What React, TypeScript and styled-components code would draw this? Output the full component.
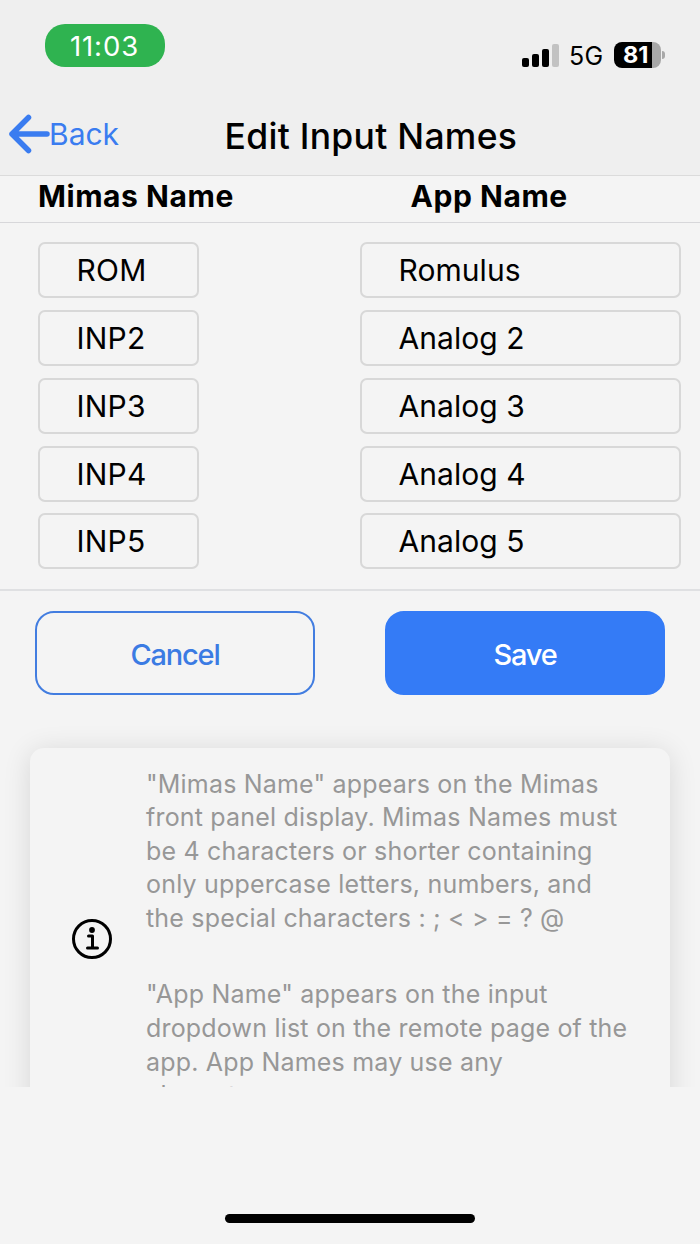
import React from "react";
import styled, { createGlobalStyle } from "styled-components";

const GlobalStyle = createGlobalStyle`
  * { box-sizing: border-box; }
  body { margin: 0; background: #f4f4f4; }
`;

const Screen = styled.div`
  width: 700px;
  height: 1244px;
  display: flex;
  flex-direction: column;
  overflow: hidden;
  background: #f4f4f4;
  color: #000;
  font-family: Inter, "Liberation Sans", sans-serif;
  font-size: 30px;
`;

const TopArea = styled.header`
  height: 176px;
  flex: none;
  background: #efefef;
  border-bottom: 1.5px solid #dbdbdb;
`;

const StatusBar = styled.div`
  height: 95px;
  display: flex;
  justify-content: space-between;
  padding: 24px 35px 0 44.5px;
`;

const TimePill = styled.div`
  width: 120px;
  height: 43px;
  border-radius: 20px;
  background: #2fb350;
  color: #fff;
  font-size: 27.5px;
  line-height: 44px;
  letter-spacing: 0.9px;
  text-align: center;
`;

const Indicators = styled.div`
  display: flex;
  height: 26px;
  margin-top: 18px;
`;

const SignalIcon = styled.svg`
  width: 37px;
  height: 26px;
  flex: none;
`;

const Network = styled.span`
  width: 34px;
  margin: 0 11px 0 10px;
  font-size: 25px;
  line-height: 28px;
  letter-spacing: 0.3px;
  white-space: nowrap;
`;

const Battery = styled.div`
  width: 47px;
  height: 26px;
  border-radius: 8px;
  background: linear-gradient(90deg, #000 38px, #a8a8a8 38px);
  color: #fff;
  font-size: 23.5px;
  font-weight: 700;
  line-height: 26px;
  padding-left: 9px;
  letter-spacing: 0;
`;

const BatteryTip = styled.div`
  width: 3px;
  height: 8px;
  margin: 9px 0 0 1px;
  border-radius: 0 3px 3px 0;
  background: #a8a8a8;
`;

const NavBar = styled.nav`
  display: grid;
  grid-template-columns: 224.5px 1fr;
  align-items: center;
  height: 78px;
`;

const BackLink = styled.a`
  display: flex;
  align-items: center;
  padding-left: 8px;
  color: #3a7cf0;
  font-weight: 400;
  letter-spacing: 0;
`;

const BackArrow = styled.svg`
  width: 42px;
  height: 40px;
  flex: none;
  margin-right: -1px;
`;

const Title = styled.h1`
  margin: 4px 0 0;
  font-size: 35.5px;
  font-weight: 500;
  letter-spacing: 0.28px;
  white-space: nowrap;
`;

const ColumnHeads = styled.div`
  display: grid;
  grid-template-columns: 372.5px 1fr;
  height: 47px;
  flex: none;
  padding-left: 38px;
  border-bottom: 1px solid #d7d7da;
  font-weight: 650;
  letter-spacing: 0.55px;
  line-height: 40px;
`;

const FieldList = styled.div`
  display: flex;
  flex-direction: column;
  gap: 11.8px;
  padding: 19.2px 19px 18px 37.5px;
  height: 368px;
  flex: none;
  border-bottom: 2px solid #dfe0e2;
`;

const FieldRow = styled.div`
  display: flex;
  justify-content: space-between;
`;

const Field = styled.div<{ $width: number; $spacing: number }>`
  width: ${(p) => p.$width}px;
  height: 56px;
  border: 2px solid #d8d8d8;
  border-radius: 7px;
  padding-left: 37px;
  line-height: 53px;
  letter-spacing: ${(p) => p.$spacing}px;
`;

const Actions = styled.div`
  display: flex;
  justify-content: space-between;
  flex: none;
  padding: 20px 35px 0;
  height: 105.5px;
`;

const Button = styled.button<{ $primary?: boolean }>`
  width: 280px;
  height: 84px;
  padding: 3px 0 0;
  border: 2px solid ${(p) => (p.$primary ? "#347bf6" : "#427de0")};
  border-radius: 19px;
  background: ${(p) => (p.$primary ? "#347bf6" : "transparent")};
  color: ${(p) => (p.$primary ? "#fff" : "#3b7be3")};
  font: 450 29px Inter, "Liberation Sans", sans-serif;
  letter-spacing: -1.2px;
`;

const ScrollArea = styled.div`
  height: 390.5px;
  flex: none;
  overflow: hidden;
  padding: 51px 30px 0;
`;

const InfoCard = styled.section`
  display: grid;
  grid-template-columns: 116px 1fr;
  height: 383px;
  border-radius: 14px;
  background: #f4f4f4;
  box-shadow: 0 3px 28px rgba(0, 0, 0, 0.12);
`;

const InfoIcon = styled.svg`
  width: 42px;
  height: 42px;
  align-self: center;
  margin-left: 41px;
`;

const InfoText = styled.div`
  padding-top: 20px;
  color: #979797;
  font-size: 25px;
  line-height: 33.6px;
  letter-spacing: 0.19px;
  white-space: nowrap;
`;

const Paragraph = styled.p`
  margin: 0;
  & + & { margin-top: 43px; }
`;

const HomeIndicator = styled.div`
  width: 250px;
  height: 9px;
  margin: 127px auto 0;
  border-radius: 5px;
  background: #000;
`;

const inputs = [
  ["ROM", "Romulus"],
  ["INP2", "Analog 2"],
  ["INP3", "Analog 3"],
  ["INP4", "Analog 4"],
  ["INP5", "Analog 5"],
];

export default function App() {
  return (
    <Screen>
      <GlobalStyle />
      <TopArea>
        <StatusBar>
          <TimePill>11:03</TimePill>
          <Indicators>
            <SignalIcon viewBox="0 0 37 26">
              <rect x="0" y="16" width="7" height="9" rx="2" />
              <rect x="10" y="12" width="7" height="13" rx="2" />
              <rect x="20" y="7" width="7" height="18" rx="2" />
              <rect x="30" y="2" width="7" height="23" rx="2" fill="#c2c2c2" />
            </SignalIcon>
            <Network>5G</Network>
            <Battery>81</Battery>
            <BatteryTip />
          </Indicators>
        </StatusBar>
        <NavBar>
          <BackLink>
            <BackArrow viewBox="0 0 42 40" fill="none" stroke="#3a7cf0" strokeWidth="5.5" strokeLinecap="round" strokeLinejoin="round">
              <path d="M39 20H4M20.5 3.5L4 20l16.500 16.500" />
            </BackArrow>
            Back
          </BackLink>
          <Title>Edit Input Names</Title>
        </NavBar>
      </TopArea>
      <ColumnHeads>
        <span>Mimas Name</span>
        <span>App Name</span>
      </ColumnHeads>
      <FieldList>
        {inputs.map(([mimas, app]) => (
          <FieldRow key={mimas}>
            <Field $width={161} $spacing={0.2}>{mimas}</Field>
            <Field $width={321.5} $spacing={0.05}>{app}</Field>
          </FieldRow>
        ))}
      </FieldList>
      <Actions>
        <Button>Cancel</Button>
        <Button $primary>Save</Button>
      </Actions>
      <ScrollArea>
        <InfoCard>
          <InfoIcon viewBox="0 0 42 42" fill="none" stroke="#000" strokeWidth="3" strokeLinecap="round" strokeLinejoin="round">
            <circle cx="21" cy="21" r="18.500" />
            <path d="M17.500 18H21.500V30M16.500 30H26.500" />
            <circle cx="21" cy="12" r="2.900" fill="#000" stroke="none" />
          </InfoIcon>
          <InfoText>
            <Paragraph>
              "Mimas Name" appears on the Mimas<br />
              front panel display. Mimas Names must<br />
              be 4 characters or shorter containing<br />
              only uppercase letters, numbers, and<br />
              the special characters : ; &lt; &gt; = ? @
            </Paragraph>
            <Paragraph>
              "App Name" appears on the input<br />
              dropdown list on the remote page of the<br />
              app. App Names may use any<br />
              characters.
            </Paragraph>
          </InfoText>
        </InfoCard>
      </ScrollArea>
      <HomeIndicator />
    </Screen>
  );
}
